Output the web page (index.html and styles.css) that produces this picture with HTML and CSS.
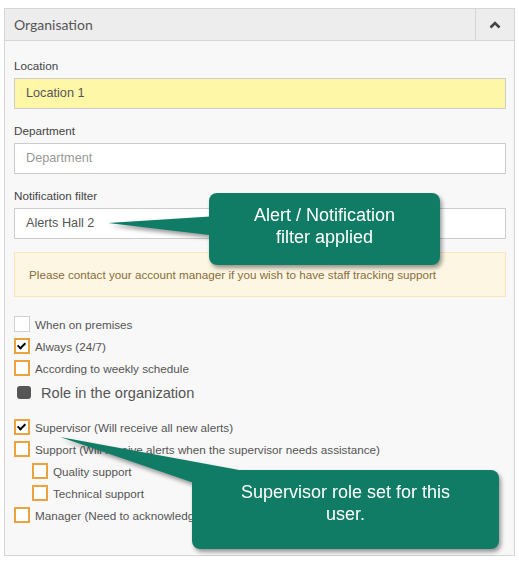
FILE: index.html
```html
<!DOCTYPE html>
<html lang="en">
<head>
    <meta charset="UTF-8">
    <meta name="viewport" content="width=device-width, initial-scale=1.0">
    <title>Organisation</title>
    <link rel="stylesheet" href="styles.css">
</head>
<body>
    <div class="page">
        <div class="panel">
            <!-- Panel header -->
            <div class="panel-header">
                <div class="panel-title">Organisation</div>
                <button class="collapse-btn" type="button">
                    <svg width="12" height="8" viewBox="0 0 12 8"><polyline points="1.5,6.5 6,2 10.5,6.5" fill="none" stroke="#444" stroke-width="2.6"/></svg>
                </button>
            </div>

            <div class="panel-body">
                <div class="field">
                    <label class="field-label">Location</label>
                    <div class="input input-highlight">Location 1</div>
                </div>
                <div class="field">
                    <label class="field-label">Department</label>
                    <div class="input input-placeholder">Department</div>
                </div>
                <div class="field">
                    <label class="field-label">Notification filter</label>
                    <div class="input">Alerts Hall 2</div>
                </div>

                <div class="alert">Please contact your account manager if you wish to have staff tracking support</div>

                <!-- Tracking options -->
                <div class="check-list">
                    <div class="check-row"><span class="box box-disabled"></span>When on premises</div>
                    <div class="check-row"><span class="box checked"></span>Always (24/7)</div>
                    <div class="check-row"><span class="box"></span>According to weekly schedule</div>
                </div>

                <div class="section-title"><span class="section-icon"></span>Role in the organization</div>

                <!-- Roles -->
                <div class="check-list">
                    <div class="check-row"><span class="box checked"></span>Supervisor (Will receive all new alerts)</div>
                    <div class="check-row"><span class="box"></span>Support (Will receive alerts when the supervisor needs assistance)</div>
                    <div class="check-row sub"><span class="box"></span>Quality support</div>
                    <div class="check-row sub"><span class="box"></span>Technical support</div>
                    <div class="check-row"><span class="box"></span>Manager (Need to acknowledge alerts)</div>
                </div>
            </div>
        </div>

        <!-- Callouts -->
        <div class="callout callout-filter">
            <svg class="callout-tail" width="110" height="20" viewBox="0 0 110 20"><polygon points="0,7 110,0 110,20"/></svg>
            <div class="callout-text">Alert / Notification filter applied</div>
        </div>
        <div class="callout callout-role">
            <svg class="callout-tail" width="192" height="48" viewBox="0 0 192 48"><polygon points="0,0 190,35 140,48"/></svg>
            <div class="callout-text">Supervisor role set for this user.</div>
        </div>
    </div>
</body>
</html>
```

FILE: styles.css
```css
body {
    margin: 0;
    padding: 0;
    background: #fff;
    font-family: "Liberation Sans", Arial, sans-serif;
    color: #444;
}

.page {
    position: relative;
    padding: 8px 4px 7px 4px;
}

.panel {
    border: 1px solid #d6d6d6;
    background: #f8f8f8;
    height: 546px;
}

.panel-header {
    display: flex;
    height: 31px;
    background: #ededed;
    border-bottom: 1px solid #d6d6d6;
}

.panel-title {
    flex: 1;
    padding-left: 9px;
    font-family: Lato, sans-serif;
    font-size: 14px;
    line-height: 31px;
    color: #555;
}

.collapse-btn {
    width: 39px;
    border: none;
    border-left: 1px solid #d6d6d6;
    background: transparent;
    display: flex;
    align-items: center;
    justify-content: center;
    padding: 0;
    cursor: pointer;
}

.panel-body {
    padding: 16px 8px 0 9px;
}

.field {
    margin-bottom: 13px;
}

.field-label {
    display: block;
    font-size: 11.7px;
    line-height: 17px;
    margin-bottom: 4px;
    color: #444;
}

.input {
    height: 29px;
    line-height: 29px;
    border: 1px solid #ccc;
    background: #fff;
    padding-left: 11px;
    font-size: 12.7px;
    color: #555;
}

.input-highlight {
    background: #fff7a8;
}

.input-placeholder {
    color: #999;
}

.alert {
    height: 43px;
    line-height: 43px;
    padding-left: 14px;
    background: #fcf6e2;
    border: 1px solid #f9e5b9;
    font-size: 11.7px;
    color: #8a6d3b;
    margin-bottom: 19px;
}

.check-list {
    display: flex;
    flex-direction: column;
    gap: 6px;
}

.check-row {
    display: flex;
    align-items: center;
    height: 16px;
    font-size: 11.7px;
    color: #555;
}

.check-row.sub {
    padding-left: 18px;
}

.box {
    box-sizing: border-box;
    width: 16px;
    height: 16px;
    border: 2px solid #eaa33e;
    background: #fff;
    margin-right: 5px;
    position: relative;
}

.box-disabled {
    border: 1px solid #d0d0d0;
}

.box.checked::after {
    content: "";
    position: absolute;
    left: 3px;
    top: 1px;
    width: 3px;
    height: 6px;
    border: solid #000;
    border-width: 0 2.5px 2.5px 0;
    transform: rotate(45deg);
}

.section-title {
    display: flex;
    align-items: center;
    height: 21px;
    margin: 6px 0 16px 3px;
    font-size: 14.6px;
    color: #555;
}

.section-icon {
    width: 14px;
    height: 13px;
    border-radius: 3px;
    background: #555;
    margin-right: 10px;
}

/* Green annotation bubbles */
.callout {
    position: absolute;
    box-sizing: border-box;
    background: #107c66;
    border-radius: 8px;
    color: #fff;
    font-size: 18px;
    line-height: 22px;
    text-align: center;
    padding: 11px 32px 0 32px;
    filter: drop-shadow(2px 3px 2px rgba(0, 0, 0, 0.4));
}

.callout-tail {
    position: absolute;
    fill: #107c66;
    overflow: visible;
}

.callout-text {
    position: relative;
}

.callout-filter {
    left: 209px;
    top: 193px;
    width: 231px;
    height: 72px;
}

.callout-filter .callout-tail {
    left: -101px;
    top: 23px;
}

.callout-role {
    left: 192px;
    top: 470px;
    width: 307px;
    height: 79px;
}

.callout-role .callout-tail {
    left: -132px;
    top: -33px;
}
```
